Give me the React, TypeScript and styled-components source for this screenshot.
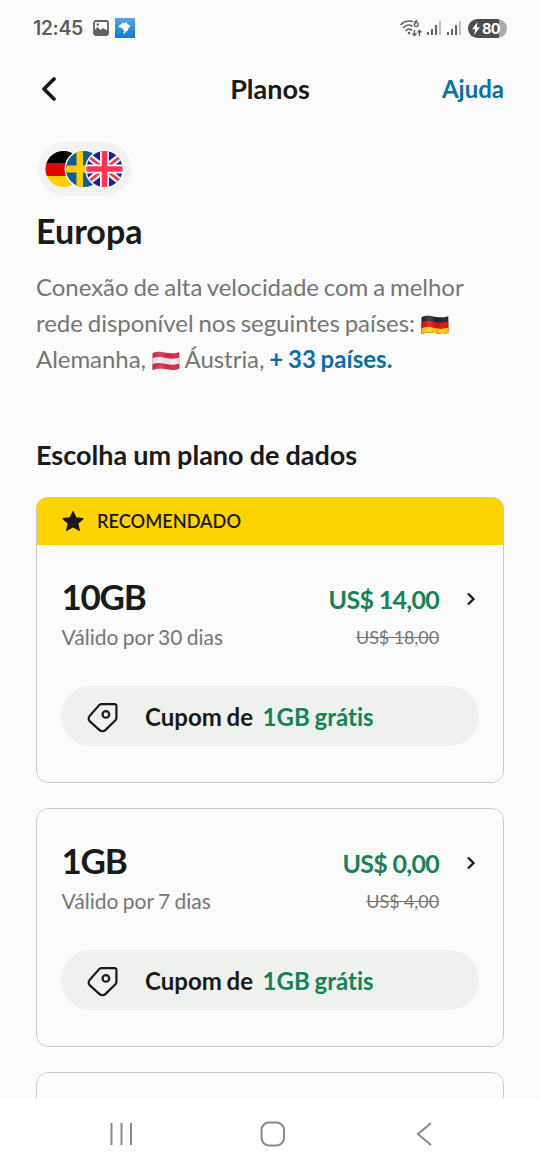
import React from "react";
import styled, { createGlobalStyle } from "styled-components";

const GlobalStyle = createGlobalStyle`
  *, *::before, *::after { box-sizing: border-box; }
  body { margin: 0; background: #fbfbfb; }
  p, h1, h2, h3 { margin: 0; }
  button { border: 0; padding: 0; background: none; font: inherit; color: inherit; }
  svg { display: block; flex: none; }
`;

const Screen = styled.div`
  width: 540px;
  height: 1170px;
  display: flex;
  flex-direction: column;
  overflow: hidden;
  background: #fbfbfb;
  color: #191a19;
  font-family: Lato, "Open Sans", sans-serif;
  font-variant-ligatures: none;
`;

const StatusBar = styled.div`
  height: 56px;
  flex: none;
  display: flex;
  align-items: center;
  justify-content: space-between;
  padding: 0 33px;
  color: #5e5e5e;
`;

const StatusGroup = styled.div<{ $gap: number }>`
  display: flex;
  align-items: center;
  gap: ${(p) => p.$gap}px;
`;

const Clock = styled.span`
  width: 52px;
  font: 600 19.5px/24px Inter, Roboto, sans-serif;
  letter-spacing: -0.4px;
  white-space: nowrap;
`;

const Battery = styled.span`
  width: 39px;
  height: 19px;
  margin-left: 2px;
  display: flex;
  align-items: center;
  justify-content: center;
  gap: 2px;
  padding-right: 3px;
  border-radius: 10px;
  background: linear-gradient(90deg, #4d4d4d 0 31px, #aaaaaa 31px);
  color: #fff;
  font: 700 14.5px/19px Inter, Roboto, sans-serif;
  letter-spacing: -0.5px;
`;

const Header = styled.header`
  height: 68px;
  flex: none;
  display: grid;
  grid-template-columns: 100px 1fr 100px;
  align-items: center;
  padding: 0 36px 2px;
`;

const BackButton = styled.button`
  justify-self: start;
  padding-left: 4px;
`;

const HeaderTitle = styled.h1`
  text-align: center;
  font-size: 27px;
  line-height: 32px;
  font-weight: 700;
`;

const HelpLink = styled.button`
  justify-self: end;
  color: #0a6fa3;
  font-size: 24px;
  line-height: 32px;
  font-weight: 700;
`;

const Content = styled.main`
  flex: 1;
  min-height: 0;
  overflow: hidden;
  padding: 18px 36px 0;
`;

const FlagPill = styled.div`
  width: 93px;
  height: 54px;
  margin-left: 2px;
  display: flex;
  align-items: center;
  justify-content: center;
  border-radius: 27px;
  background: #f2f2f2;
`;

const Region = styled.h2`
  margin-top: 13px;
  font-size: 34px;
  line-height: 44px;
  font-weight: 700;
`;

const Description = styled.p`
  margin-top: 16px;
  color: #757675;
  font-size: 24px;
  line-height: 36px;
  letter-spacing: -0.04px;
  word-spacing: -1.2px;
  white-space: nowrap;
`;

const InlineFlag = styled.svg`
  && { display: inline-block; }
  width: 28px;
  height: 20px;
  margin-left: 1.5px;
  vertical-align: -2.7px;
`;

const MoreCountries = styled.span`
  color: #0a6fa3;
  font-weight: 700;
  letter-spacing: 0.05px;
`;

const SectionTitle = styled.h2`
  margin-top: 60px;
  font-size: 27px;
  line-height: 36px;
  font-weight: 700;
  word-spacing: -0.5px;
`;

const PlanList = styled.div`
  margin-top: 24px;
  display: flex;
  flex-direction: column;
  gap: 25px;
`;

const Card = styled.article<{ $height: number }>`
  position: relative;
  height: ${(p) => p.$height}px;
  border-radius: 12px;
  overflow: hidden;
  &::after {
    content: "";
    position: absolute;
    inset: 0;
    border: 1.5px solid #c9c9c9;
    border-radius: 12px;
  }
`;

const Banner = styled.div`
  height: 48px;
  display: flex;
  align-items: center;
  gap: 13px;
  padding-left: 26px;
  background: #ffd302;
  font-size: 18.2px;
  font-weight: 600;
`;

const CardBody = styled.div<{ $top: number }>`
  padding: ${(p) => p.$top}px 25px 0;
`;

const PlanRow = styled.div`
  display: grid;
  grid-template-columns: 1fr auto 40px;
  align-items: center;
  padding-left: 0.6px;
`;

const DataAmount = styled.h3`
  padding-bottom: 3px;
  font-size: 35px;
  line-height: 42px;
  font-weight: 700;
  letter-spacing: -1.3px;
`;

const Price = styled.span`
  color: #17825a;
  font-size: 25px;
  line-height: 42px;
  padding-top: 3px;
  font-weight: 700;
  letter-spacing: -0.7px;
`;

const Chevron = styled.svg`
  justify-self: end;
  margin: 2px 2px 0 0;
`;

const Validity = styled.span`
  color: #757675;
  font-size: 21px;
  line-height: 34px;
  word-spacing: -1px;
`;

const OldPrice = styled.span`
  justify-self: end;
  color: #757675;
  font-size: 18px;
  line-height: 34px;
  letter-spacing: -0.1px;
  text-decoration: line-through;
`;

const Coupon = styled.div`
  height: 60px;
  margin-top: 32px;
  display: flex;
  align-items: center;
  padding-left: 26px;
  border-radius: 30px;
  background: #eff1ee;
  font-size: 24px;
  font-weight: 700;
  word-spacing: -1px;
`;

const CouponText = styled.span`
  margin-left: 26.5px;
`;

const CouponValue = styled.span`
  margin-left: 9.5px;
  color: #17825a;
`;

const NavBar = styled.nav`
  height: 72px;
  flex: none;
  display: grid;
  grid-template-columns: 151px 152px auto;
  align-items: center;
  padding-left: 109px;
  background: #fff;
`;

const Signal = () => (
  <svg width="15" height="16" viewBox="0 0 15 16" strokeWidth="2" stroke="#616161" fill="none">
    <path d="M2 12v3M6 9v6M10 5v10" />
    <path d="M14 1v14" stroke="#c2c2c2" />
  </svg>
);

const Wifi = () => (
  <svg width="23" height="19" viewBox="0 0 23 19" fill="none" stroke="#616161" strokeWidth="1.6">
    <path d="M1 5.5C5 1.5 9 1.5 12.5 2.5M3.5 8.5C6 6 9.5 5.5 12 7M6 11.5C7.5 10 10 10 11.5 11" strokeLinecap="round" />
    <circle cx="9" cy="14" r="1.3" fill="#616161" stroke="none" />
    <path d="M17.5 1.5C15 2 14.5 4 14.5 5.5" strokeWidth="1.3" />
    <circle cx="16.3" cy="5.6" r="1.9" strokeWidth="1.3" />
    <path d="M14.5 11v5.5M12.5 14.5l2 2 2-2M19.5 17v-5.5M17.5 13.5l2-2 2 2" strokeWidth="1.4" />
  </svg>
);

const PictureIcon = () => (
  <svg width="16" height="16" viewBox="0 0 16 16">
    <rect x="1" y="1" width="14" height="14" rx="2" fill="none" stroke="#616161" strokeWidth="1.8" />
    <path d="M1 11l3.5-4 3 3 2.500-2 5 3v4H1z" fill="#616161" />
    <circle cx="4.800" cy="4.500" r="1.200" fill="#616161" />
  </svg>
);

const BrazilIcon = () => (
  <svg width="20" height="20" viewBox="0 0 20 20">
    <defs>
      <linearGradient id="sky" x1="0" y1="0" x2="0" y2="1">
        <stop stopColor="#55a5ea" />
        <stop offset="1" stopColor="#1678cb" />
      </linearGradient>
    </defs>
    <path d="M0 0h20v20H0z" fill="url(#sky)" />
    <path d="M4.500 7l2.300-1 .5-1.700 1.700 1L11.500 4l1 2.200 3 1.300-1 1.800-1 1-.5 2.200-2 1-1.500 2.500-1.200-1 .9-1.700-1.400-2-.8-1.300-2-.2-1.500-1.300z" fill="#eef8ff" />
  </svg>
);

const RoundFlags = () => (
  <svg width="79" height="38" viewBox="0 0 79 38">
    <defs>
      <clipPath id="de"><circle cx="18.500" cy="19" r="18" /></clipPath>
      <clipPath id="se"><circle cx="39" cy="19" r="18" /></clipPath>
      <clipPath id="gb"><circle cx="59.500" cy="19" r="18" /></clipPath>
    </defs>
    <g clipPath="url(#de)">
      <path d="M0 0h38v13H0z" fill="#000" />
      <path d="M0 13h38v13H0z" fill="#e30000" />
      <path d="M0 26h38v12H0z" fill="#ffcd05" />
    </g>
    <circle cx="39" cy="19" r="19.500" fill="#f8f8f8" />
    <g clipPath="url(#se)">
      <path d="M20 0h40v38H20z" fill="#125c96" />
      <path d="M31.500 0h6.500v38h-6.500zM20 15.500h40v7H20z" fill="#fc0" />
    </g>
    <circle cx="59.500" cy="19" r="19.500" fill="#f8f8f8" />
    <g clipPath="url(#gb)">
      <path d="M41 0h38v38H41z" fill="#261b9b" />
      <path d="M40.500 4l38 30M78.500 4l-38 30" stroke="#fff" strokeWidth="7" />
      <path d="M40.500 4l38 30M78.500 4l-38 30" stroke="#fb3455" strokeWidth="2.800" />
      <path d="M59.500 0v38M40.500 19h38" stroke="#fff" strokeWidth="9" />
      <path d="M59.500 0v38M40.500 19h38" stroke="#fb3455" strokeWidth="5.500" />
    </g>
  </svg>
);

const WavyFlag = ({ id, stripes }: { id: string; stripes: string[] }) => (
  <InlineFlag viewBox="0 0 28 20">
    <defs>
      <clipPath id={id}>
        <path d="M.5 2.200C5.500-.2 9 .8 14 1.700s8 1 13.300-.5v16.300c-5.300 2.200-8.300 1.500-13.300 .6s-8-1.200-13.500 .900z" />
      </clipPath>
      <linearGradient id={`${id}-shade`}>
        <stop stopColor="#000" stopOpacity=".08" />
        <stop offset=".3" stopColor="#fff" stopOpacity=".16" />
        <stop offset=".6" stopColor="#000" stopOpacity=".06" />
        <stop offset=".8" stopColor="#fff" stopOpacity=".05" />
        <stop offset="1" stopColor="#000" stopOpacity=".14" />
      </linearGradient>
    </defs>
    <g clipPath={`url(#${id})`}>
      {stripes.map((color, i) => (
        <path
          key={i}
          fill={color}
          d={`M0 ${i === 0 ? 0 : i * 6 + 1.5}c6-2.500 9-1.500 14-.5s8 1 14-.8V20H0z`}
        />
      ))}
      <path d="M0 0h28v20H0z" fill={`url(#${id}-shade)`} />
    </g>
  </InlineFlag>
);

const TagIcon = styled.svg`
  width: 31.5px;
  height: 31.5px;
  margin-top: 4px;
`;

const Tag = () => (
  <TagIcon viewBox="0 0 33 33" fill="none" stroke="#191a19" strokeWidth="2.300" strokeLinejoin="round">
    <path d="M15.200 2.200H29a1.800 1.800 0 0 1 1.800 1.800v12.800a3 3 0 0 1-.8 2L19.500 29.200a4.800 4.800 0 0 1-6.600 0L3 20.300a4 4 0 0 1 0-5.900L12.700 3.300a3.500 3.500 0 0 1 2.500-1.100z" />
    <circle cx="19.800" cy="13" r="3.500" />
  </TagIcon>
);

interface Plan {
  amount: string;
  days: number;
  price: string;
  oldPrice: string;
  recommended?: boolean;
}

const plans: Plan[] = [
  { amount: "10GB", days: 30, price: "US$ 14,00", oldPrice: "US$ 18,00", recommended: true },
  { amount: "1GB", days: 7, price: "US$ 0,00", oldPrice: "US$ 4,00" },
];

const PlanCard = ({ plan }: { plan: Plan }) => (
  <Card $height={plan.recommended ? 286 : 239}>
    {plan.recommended && (
      <Banner>
        <svg width="22" height="22" viewBox="0 0 22 22">
          <path d="M11 1.700l2.900 6.300 7 .7-5.200 4.600 1.500 6.900L11 16.700l-6.200 3.500 1.500-6.900L1.100 8.700l7-.7z" fill="#191a19" stroke="#191a19" strokeWidth="1.400" strokeLinejoin="round" />
        </svg>
        RECOMENDADO
      </Banner>
    )}
    <CardBody $top={plan.recommended ? 30 : 31}>
      <PlanRow>
        <DataAmount>{plan.amount}</DataAmount>
        <Price>{plan.price}</Price>
        <Chevron width="12" height="16" viewBox="0 0 12 16">
          <path d="M3 2.500L8.500 8 3 13.500" fill="none" stroke="#191a19" strokeWidth="2.300" />
        </Chevron>
      </PlanRow>
      <PlanRow>
        <Validity>Válido por {plan.days} dias</Validity>
        <OldPrice>{plan.oldPrice}</OldPrice>
      </PlanRow>
      <Coupon>
        <Tag />
        <CouponText>Cupom de</CouponText>
        <CouponValue>1GB grátis</CouponValue>
      </Coupon>
    </CardBody>
  </Card>
);

export default function App() {
  return (
    <Screen>
      <GlobalStyle />
      <StatusBar>
        <StatusGroup $gap={8}>
          <Clock>12:45</Clock>
          <StatusGroup $gap={6}>
            <PictureIcon />
            <BrazilIcon />
          </StatusGroup>
        </StatusGroup>
        <StatusGroup $gap={3}>
          <Wifi />
          <StatusGroup $gap={5}>
            <Signal />
            <Signal />
            <Battery>
              <svg width="8" height="13" viewBox="0 0 8 13">
                <path d="M5.500 0L0 7.300h3.200L2 13l6-7.700H4.800z" fill="#fff" />
              </svg>
              80
            </Battery>
          </StatusGroup>
        </StatusGroup>
      </StatusBar>
      <Header>
        <BackButton aria-label="Voltar">
          <svg width="18" height="26" viewBox="0 0 18 26">
            <path d="M14 3L4 13l10 10" fill="none" stroke="#191a19" strokeWidth="3.800" strokeLinecap="round" strokeLinejoin="round" />
          </svg>
        </BackButton>
        <HeaderTitle>Planos</HeaderTitle>
        <HelpLink>Ajuda</HelpLink>
      </Header>
      <Content>
        <FlagPill>
          <RoundFlags />
        </FlagPill>
        <Region>Europa</Region>
        <Description>
          Conexão de alta velocidade com a melhor
          <br />
          rede disponível nos seguintes países: <WavyFlag id="germany" stripes={["#252525", "#df1010", "#ffce16"]} />
          <br />
          Alemanha, <WavyFlag id="austria" stripes={["#d52a48", "#f1f0f4", "#d52a48"]} /> Áustria,{" "}
          <MoreCountries>+ 33 países.</MoreCountries>
        </Description>
        <SectionTitle>Escolha um plano de dados</SectionTitle>
        <PlanList>
          {plans.map((plan) => (
            <PlanCard key={plan.amount} plan={plan} />
          ))}
          <Card $height={239} />
        </PlanList>
      </Content>
      <NavBar>
        <svg width="25" height="24" viewBox="0 0 25 24">
          <path d="M2.500 1v22M12.500 1v22M22 1v22" stroke="#898989" strokeWidth="2" />
        </svg>
        <svg width="26" height="26" viewBox="0 0 26 26">
          <rect x="1.500" y="1.500" width="22.500" height="23" rx="7.500" fill="none" stroke="#898989" strokeWidth="2" />
        </svg>
        <svg width="22" height="26" viewBox="-3 0 22 26">
          <path d="M16 2L3 13l13 11" fill="none" stroke="#898989" strokeWidth="2" />
        </svg>
      </NavBar>
    </Screen>
  );
}
